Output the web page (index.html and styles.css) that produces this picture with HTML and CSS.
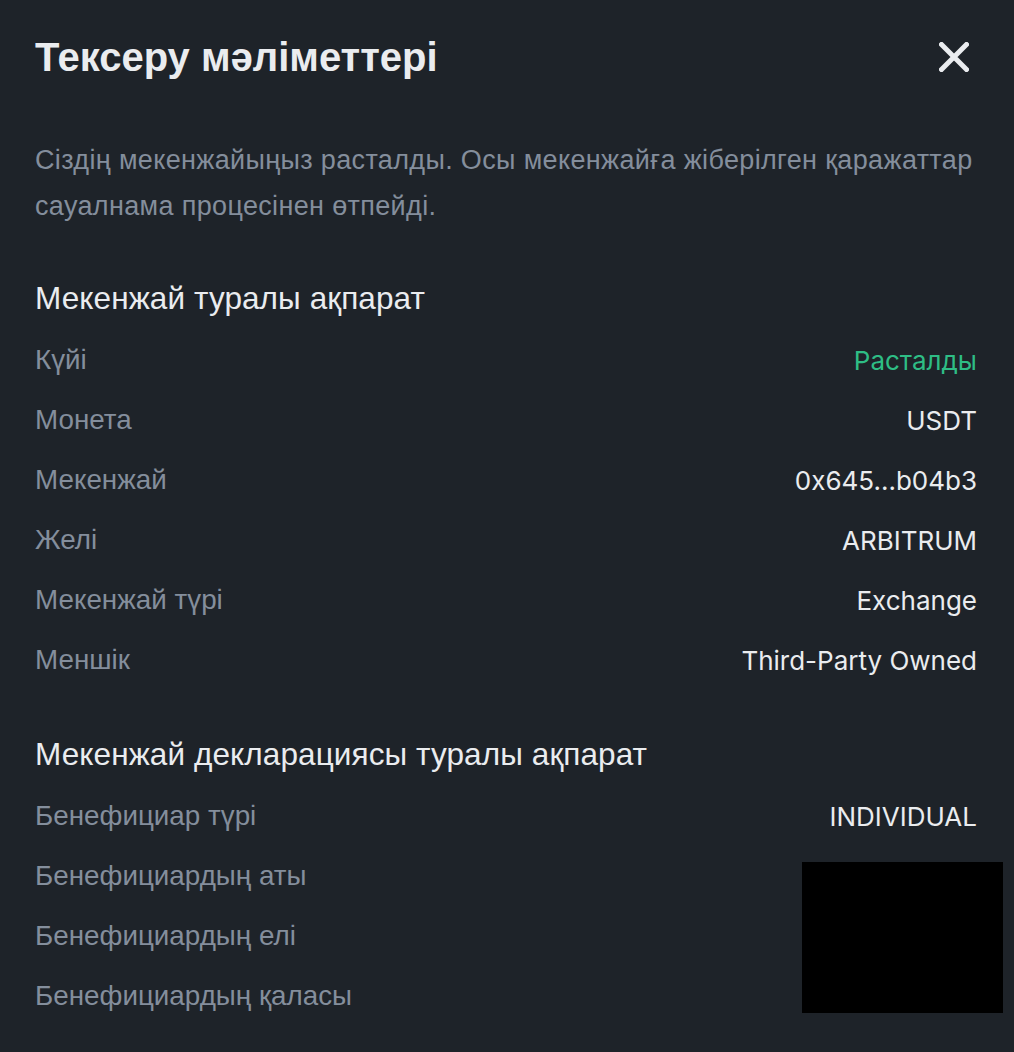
FILE: index.html
```html
<!DOCTYPE html>
<html lang="kk">
<head>
<meta charset="utf-8">
<title>Тексеру мәліметтері</title>
<link rel="stylesheet" href="styles.css">
</head>
<body>
<div class="modal">
  <div class="header">
    <h1 class="title">Тексеру мәліметтері</h1>
    <button class="close" aria-label="close">
      <svg width="30" height="30" viewBox="0 0 30 30"><path d="M2.5 2.5 L27.5 27.5 M27.5 2.5 L2.5 27.5" stroke="#eaecef" stroke-width="5" stroke-linecap="square"/></svg>
    </button>
  </div>
  <p class="desc">Сіздің мекенжайыңыз расталды. Осы мекенжайға жіберілген қаражаттар сауалнама процесінен өтпейді.</p>

  <h2 class="section">Мекенжай туралы ақпарат</h2>
  <div class="rows">
    <div class="row"><span class="label">Күйі</span><span class="value green">Расталды</span></div>
    <div class="row"><span class="label">Монета</span><span class="value">USDT</span></div>
    <div class="row"><span class="label">Мекенжай</span><span class="value">0x645...b04b3</span></div>
    <div class="row"><span class="label">Желі</span><span class="value">ARBITRUM</span></div>
    <div class="row"><span class="label">Мекенжай түрі</span><span class="value">Exchange</span></div>
    <div class="row"><span class="label">Меншік</span><span class="value">Third-Party Owned</span></div>
  </div>

  <h2 class="section second">Мекенжай декларациясы туралы ақпарат</h2>
  <div class="rows">
    <div class="row"><span class="label">Бенефициар түрі</span><span class="value">INDIVIDUAL</span></div>
    <div class="row"><span class="label">Бенефициардың аты</span><span class="value"></span></div>
    <div class="row"><span class="label">Бенефициардың елі</span><span class="value"></span></div>
    <div class="row"><span class="label">Бенефициардың қаласы</span><span class="value"></span></div>
  </div>
  <div class="redact"></div>
</div>
</body>
</html>
```

FILE: styles.css
```css
html, body {
  margin: 0;
  padding: 0;
  background: #1e2329;
}
body {
  width: 1014px;
  height: 1052px;
  overflow: hidden;
  font-family: "Liberation Sans", Arial, sans-serif;
}
.modal {
  position: relative;
  padding: 33px 37px 0 35px;
}
.header {
  display: flex;
  justify-content: space-between;
  align-items: center;
  height: 48px;
}
.title {
  margin: 0;
  font-size: 40px;
  line-height: 48px;
  font-weight: 700;
  color: #eaecef;
}
.close {
  background: none;
  border: 0;
  padding: 0;
  margin-right: 8px;
  width: 30px;
  height: 30px;
  display: flex;
  cursor: pointer;
}
.desc {
  margin: 56px 0 0;
  font-size: 27px;
  line-height: 46px;
  letter-spacing: 0.35px;
  color: #848e9c;
}
.section {
  margin: 49px 0 0;
  font-size: 31.5px;
  line-height: 40px;
  letter-spacing: 0.1px;
  font-weight: 400;
  color: #eaecef;
}
.section.second {
  margin-top: 44px;
}
.rows {
  margin-top: 12px;
  display: flex;
  flex-direction: column;
}
.row {
  display: flex;
  justify-content: space-between;
  align-items: center;
  height: 60px;
}
.label {
  font-size: 27.8px;
  color: #848e9c;
}
.value {
  font-family: "Inter", "Noto Sans", sans-serif;
  font-size: 26px;
  color: #eaecef;
}
.value.green {
  color: #2ebd85;
}
.redact {
  position: absolute;
  left: 802px;
  top: 862px;
  width: 201px;
  height: 151px;
  background: #000;
}
```
